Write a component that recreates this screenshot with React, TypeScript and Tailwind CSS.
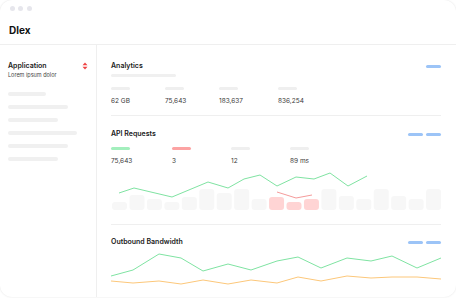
import React from "react";

const BARS = [8, 15, 11, 8, 13, 21, 17, 21, 11, 13, 8, 11, 21, 14, 11, 21, 14, 11, 21];
const RED_BARS = [9, 10, 11];

const API_GREEN = "8,23 23,18 61,27 97,12 117,18 133,9 149,5 166,16 185,7 203,9 219,3 237,16 256,6";
const API_RED = "166,22 185,28 201,25";

const OUT_GREEN =
  "0,29 22,23 48,7 70,11 92,24 117,17 140,23 166,14 187,10 210,21 236,11 260,14 281,9 306,21 330,11";
const OUT_ORANGE =
  "0,34 22,36 48,34 70,37 92,33 117,37 140,33 166,36 187,30 210,34 236,29 260,31 281,30 306,30 330,32";

function Pills({ n }: { n: number }) {
  return (
    <div className="flex gap-[3px]">
      {Array.from({ length: n }).map((_, i) => (
        <div key={i} className="h-[3px] w-[15px] rounded-full bg-[#9cc4f7]" />
      ))}
    </div>
  );
}

function Stat({ value, bar, w }: { value: string; bar: string; w: string }) {
  return (
    <div className={`flex flex-col ${w}`}>
      <div className={`h-[3px] w-[19px] rounded-full ${bar}`} />
      <div className="mt-[7px] text-[6.5px] leading-[8px] text-[#3a3a3a]">{value}</div>
    </div>
  );
}

function UpDown() {
  return (
    <svg width="6" height="8" viewBox="0 0 6 8">
      <path d="M3 0.5 L5.5 3.2 H0.5 Z" fill="#ef4444" />
      <path d="M3 7.5 L5.5 4.8 H0.5 Z" fill="#ef4444" />
    </svg>
  );
}

export default function App() {
  return (
    <div className="h-[298px] w-[456px] bg-white" style={{ fontFamily: "Inter, 'Noto Sans', sans-serif" }}>
      <div className="flex h-[297px] w-full flex-col overflow-hidden rounded-[12px] bg-white shadow-[0_0_2px_rgba(0,0,0,0.12)]">
        {/* header */}
        <div className="h-[45px] shrink-0 border-b border-[#efefef] px-[9px]">
          <div className="flex gap-[3.5px] pt-[6px] pl-[0.5px]">
            <div className="h-[5px] w-[5px] rounded-full bg-[#e6e6ec]" />
            <div className="h-[5px] w-[5px] rounded-full bg-[#e6e6ec]" />
            <div className="h-[5px] w-[5px] rounded-full bg-[#e6e6ec]" />
          </div>
          <div className="mt-[12px] text-[10px] font-bold leading-[14px] text-[#111]">Dlex</div>
        </div>

        <div className="flex flex-1">
          {/* sidebar */}
          <div className="w-[97px] shrink-0 border-r border-[#efefef] pl-[8px] pr-[8px] pt-[16px]">
            <div className="flex items-center justify-between">
              <div className="text-[7px] font-semibold leading-[10px] text-[#1a1a1a]">Application</div>
              <UpDown />
            </div>
            <div className="mt-[1px] text-[5.5px] leading-[7px] text-[#444]">Lorem ipsum dolor</div>
            <div className="mt-[13px] flex flex-col gap-[9px]">
              <div className="h-[4px] w-[38px] rounded-full bg-[#f0f0f0]" />
              <div className="h-[4px] w-[60px] rounded-full bg-[#f0f0f0]" />
              <div className="h-[4px] w-[50px] rounded-full bg-[#f0f0f0]" />
              <div className="h-[4px] w-[69px] rounded-full bg-[#f0f0f0]" />
              <div className="h-[4px] w-[60px] rounded-full bg-[#f0f0f0]" />
              <div className="h-[4px] w-[50px] rounded-full bg-[#f0f0f0]" />
            </div>
          </div>

          {/* main */}
          <div className="flex flex-1 flex-col pl-[14px] pr-[15px] pt-[16px]">
            {/* Analytics */}
            <div className="flex items-center justify-between">
              <div className="text-[7px] font-semibold leading-[10px] text-[#1a1a1a]">Analytics</div>
              <Pills n={1} />
            </div>
            <div className="mt-[3px] h-[3px] w-[65px] rounded-full bg-[#f0f0f0]" />
            <div className="mt-[10px] flex">
              <Stat value="62 GB" bar="bg-[#efefef]" w="w-[54px]" />
              <Stat value="75,643" bar="bg-[#efefef]" w="w-[54px]" />
              <Stat value="183,637" bar="bg-[#efefef]" w="w-[59px]" />
              <Stat value="836,254" bar="bg-[#efefef]" w="w-[59px]" />
            </div>
            <div className="mt-[10px] h-px w-full bg-[#efefef]" />

            {/* API Requests */}
            <div className="mt-[13px] flex items-center justify-between">
              <div className="text-[7px] font-semibold leading-[10px] text-[#1a1a1a]">API Requests</div>
              <Pills n={2} />
            </div>
            <div className="mt-[8px] flex">
              <Stat value="75,643" bar="bg-[#a3efbd]" w="w-[61px]" />
              <Stat value="3" bar="bg-[#fca3a3]" w="w-[59px]" />
              <Stat value="12" bar="bg-[#efefef]" w="w-[59px]" />
              <Stat value="89 ms" bar="bg-[#efefef]" w="w-[59px]" />
            </div>
            <svg className="mt-[5px] block" width="330" height="41" viewBox="0 0 330 41">
              {BARS.map((h, i) => (
                <rect
                  key={i}
                  x={1 + i * 17.45}
                  y={40 - h}
                  width={15}
                  height={h}
                  rx={3}
                  fill={RED_BARS.includes(i) ? "#ffd4d4" : "#f7f7f7"}
                />
              ))}
              <polyline points={API_GREEN} fill="none" stroke="#7fe3a2" strokeWidth="1" strokeLinejoin="round" />
              <polyline points={API_RED} fill="none" stroke="#f59b9b" strokeWidth="1" strokeLinejoin="round" />
            </svg>
            <div className="mt-[13px] h-px w-full bg-[#efefef]" />

            {/* Outbound Bandwidth */}
            <div className="mt-[12px] flex items-center justify-between">
              <div className="text-[7px] font-semibold leading-[10px] text-[#1a1a1a]">Outbound Bandwidth</div>
              <Pills n={2} />
            </div>
            <svg className="block" width="330" height="42" viewBox="0 0 330 42">
              <polyline points={OUT_GREEN} fill="none" stroke="#7fe3a2" strokeWidth="1" strokeLinejoin="round" />
              <polyline points={OUT_ORANGE} fill="none" stroke="#fcc77a" strokeWidth="1" strokeLinejoin="round" />
            </svg>
          </div>
        </div>
      </div>
    </div>
  );
}
